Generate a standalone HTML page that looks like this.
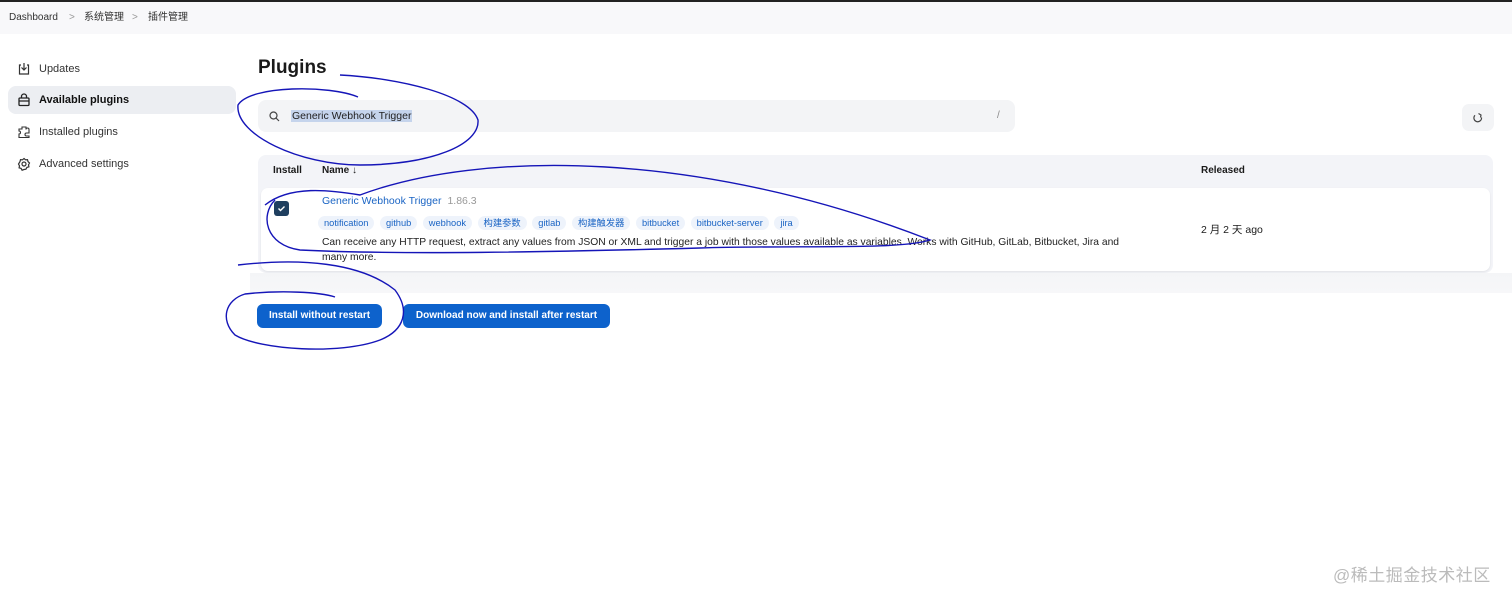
<!DOCTYPE html>
<html><head><meta charset="utf-8">
<style>
*{box-sizing:border-box;margin:0;padding:0}
body{width:1512px;height:600px;background:#fff;font-family:"Liberation Sans","Noto Sans CJK SC",sans-serif;color:#1a1a1a;position:relative;overflow:hidden}
.topline{position:absolute;left:0;top:0;width:1512px;height:2px;background:#222}
.bc{position:absolute;left:0;top:2px;width:1512px;height:32px;background:#f8f8fa;font-size:10px;color:#333}
.bc span{position:absolute;top:9px;line-height:14px}
.side div{position:absolute;left:8px;width:228px;height:28px;font-size:11px;color:#333;padding-left:31px;line-height:28px}
.side div.act{background:#eceef2;border-radius:8px;font-weight:bold;color:#111}
.side svg{position:absolute;left:9px;top:7px}
h1{position:absolute;left:258px;top:57px;font-size:19px;font-weight:bold}
.search{position:absolute;left:258px;top:100px;width:757px;height:32px;background:#f3f4f6;border-radius:8px}
.search .t{position:absolute;left:33px;top:10px;font-size:10.5px;background:#c5d4ec;padding:0 1px;color:#222}
.refresh{position:absolute;left:1462px;top:104px;width:32px;height:27px;background:#f3f4f6;border-radius:7px}
.tbl{position:absolute;left:258px;top:155px;width:1235px;height:118px;background:#f3f4f8;border-radius:8px}
.th{position:absolute;top:10px;font-size:10px;font-weight:bold}
.row{position:absolute;left:3px;top:33px;width:1229px;height:83px;background:#fff;border-radius:7px;box-shadow:0 1px 2px rgba(0,0,0,.08)}
.cb{position:absolute;left:13px;top:13px;width:15px;height:15px;background:#1f3f5f;border-radius:3px}
.name{position:absolute;left:61px;top:7px;font-size:10.5px;color:#1a64c4}
.ver{color:#999;margin-left:6px}
.tags{position:absolute;left:57px;top:27px;font-size:9.3px;color:#1a64c4;white-space:nowrap}
.tags span{background:#eef3fb;border-radius:9px;padding:2px 6px;margin-right:5.5px}
.desc{position:absolute;left:61px;top:47px;width:820px;font-size:10.3px;line-height:15px;color:#222}
.rel{position:absolute;left:940px;top:34px;font-size:10.5px}
.band{position:absolute;left:250px;top:273px;width:1262px;height:20px;background:linear-gradient(#f4f5f7,#f7f7f9)}
.btn{position:absolute;top:304px;height:24px;background:#0d62cc;color:#fff;font-size:10px;font-weight:bold;border-radius:6px;line-height:24px;text-align:center}
.wm{position:absolute;left:1333px;top:561px;font-size:17px;color:#bbb;letter-spacing:.5px}
</style></head><body>
<div class="topline"></div>
<div class="bc"><span style="left:9px">Dashboard</span><span style="left:69px;color:#999">&gt;</span><span style="left:84px">系统管理</span><span style="left:132px;color:#999">&gt;</span><span style="left:148px">插件管理</span></div>
<div class="side">
<div style="top:55px"><svg width="14" height="14" viewBox="0 0 14 14" fill="none" stroke="#333" stroke-width="1.2"><path d="M4 3H2.5v9h9V3H10M7 1v7M4.5 5.5L7 8l2.5-2.5"/></svg>Updates</div>
<div class="act" style="top:86px"><svg width="14" height="14" viewBox="0 0 14 14" fill="none" stroke="#222" stroke-width="1.3"><rect x="2" y="5" width="10" height="7.5" rx="1"/><path d="M4.5 5V3.5a2.5 2.5 0 015 0V5M2 8h10"/></svg>Available plugins</div>
<div style="top:118px"><svg width="14" height="14" viewBox="0 0 14 14" fill="none" stroke="#333" stroke-width="1.1"><path d="M5 2h4v2.5a1.5 1.5 0 013 0V8h-2.5a1.5 1.5 0 000 3H12v1.5H2V9a1.5 1.5 0 000-3V4h3z"/></svg>Installed plugins</div>
<div style="top:150px"><svg width="14" height="14" viewBox="0 0 14 14" fill="none" stroke="#333" stroke-width="1.2"><circle cx="7" cy="7" r="2"/><path d="M7 1.5l1.5 1.3 2-.2.5 2 1.5 1.4-1 1.8.4 2-2 .6-1 1.8L7 12.5l-1.9.7-1-1.8-2-.6.4-2-1-1.8L3 4.6l.5-2 2 .2z"/></svg>Advanced settings</div>
</div>
<h1>Plugins</h1>
<div class="search"><svg style="position:absolute;left:11px;top:11px" width="11" height="11" viewBox="0 0 11 11" fill="none" stroke="#444" stroke-width="1.2"><circle cx="4.5" cy="4.5" r="3.5"/><path d="M7 7l3 3"/></svg><span class="t">Generic Webhook Trigger</span><span style="position:absolute;left:739px;top:10px;font-size:10px;color:#888">/</span></div>
<div class="refresh"><svg style="position:absolute;left:10px;top:8px" width="12" height="12" viewBox="0 0 12 12" fill="none" stroke="#444" stroke-width="1.2"><path d="M9.5 5.5A3.8 3.8 0 113 3.3M6.5 1.5L9 3l-.5 2.5" /></svg></div>
<div class="tbl">
<span class="th" style="left:15px">Install</span><span class="th" style="left:64px">Name ↓</span><span class="th" style="left:943px">Released</span>
<div class="row">
<div class="cb"><svg width="15" height="15" viewBox="0 0 15 15" fill="none" stroke="#fff" stroke-width="1.4"><path d="M4.5 7.5l2 2 4-4"/></svg></div>
<div class="name">Generic Webhook Trigger<span class="ver">1.86.3</span></div>
<div class="tags"><span>notification</span><span>github</span><span>webhook</span><span>构建参数</span><span>gitlab</span><span>构建触发器</span><span>bitbucket</span><span>bitbucket-server</span><span>jira</span></div>
<div class="desc">Can receive any HTTP request, extract any values from JSON or XML and trigger a job with those values available as variables. Works with GitHub, GitLab, Bitbucket, Jira and many more.</div>
<div class="rel">2 月 2 天 ago</div>
</div>
</div>
<div class="band"></div>
<div class="btn" style="left:257px;width:125px">Install without restart</div>
<div class="btn" style="left:403px;width:207px">Download now and install after restart</div>
<svg style="position:absolute;left:0;top:0" width="1512" height="600" fill="none" stroke="#1515b8" stroke-width="1.4">
<path d="M358 97C330 85 250 85 238 105C235 135 300 165 360 165C430 165 480 145 478 120C470 95 400 78 340 75"/>
<path d="M265 205C290 185 330 190 360 195C480 150 700 150 930 240C900 250 800 245 700 248C550 252 400 255 300 250C265 245 260 215 275 200"/>
<path d="M238 265C300 258 360 262 395 290C410 310 405 330 380 340C340 355 260 350 235 335C220 320 225 300 245 294C280 290 320 292 335 297"/>
</svg>
<div class="wm">@稀土掘金技术社区</div>
</body></html>
